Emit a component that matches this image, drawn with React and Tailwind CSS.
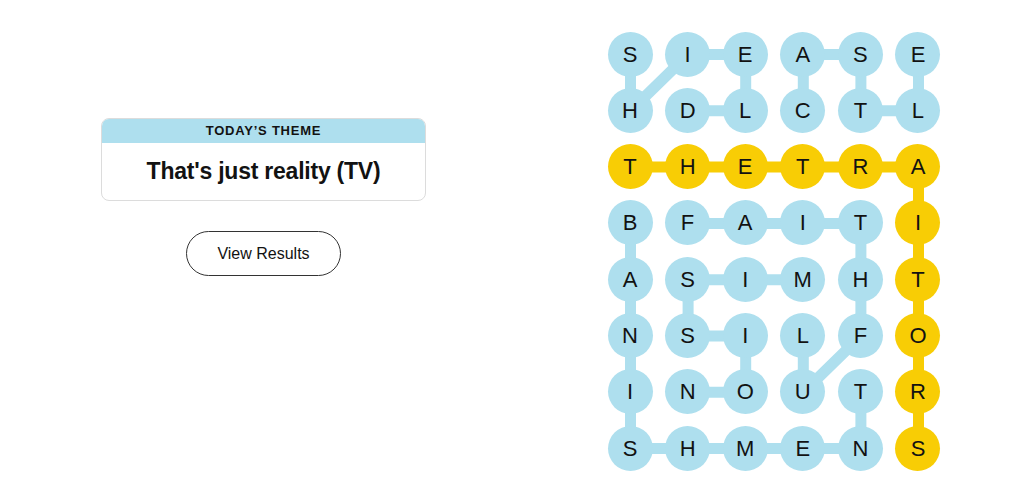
import React from 'react';

const BLUE = '#aedfee';
const YELLOW = '#f8cd05';

// letters of the board, row by row
const board = [
  'SIEASE',
  'HDLCTL',
  'THETRA',
  'BFAITI',
  'ASIMHT',
  'NSILFO',
  'INOUTR',
  'SHMENS',
];

// found words, as paths of [row, col]
const words = [
  { color: BLUE, path: [[0, 0], [1, 0], [0, 1], [0, 2], [1, 2], [1, 1]] },
  { color: BLUE, path: [[1, 3], [0, 3], [0, 4], [1, 4], [1, 5], [0, 5]] },
  {
    color: YELLOW,
    path: [[2, 0], [2, 1], [2, 2], [2, 3], [2, 4], [2, 5], [3, 5], [4, 5], [5, 5], [6, 5], [7, 5]],
  },
  {
    color: BLUE,
    path: [[3, 0], [4, 0], [5, 0], [6, 0], [7, 0], [7, 1], [7, 2], [7, 3], [7, 4], [6, 4]],
  },
  { color: BLUE, path: [[3, 1], [3, 2], [3, 3], [3, 4], [4, 4], [5, 4], [6, 3], [5, 3]] },
  { color: BLUE, path: [[4, 3], [4, 2], [4, 1], [5, 1], [5, 2], [6, 2], [6, 1]] },
];

const SIZE = 45;
const STEP_X = 57.6;
const STEP_Y = 56.3;

const spangram = new Set(words[2].path.map(([r, c]) => `${r}-${c}`));

const center = ([r, c]) => [SIZE / 2 + c * STEP_X, SIZE / 2 + r * STEP_Y];

const Board = () => (
  <div className="relative w-[333px] h-[439px]">
    <svg className="absolute inset-0" width="333" height="439">
      {words.map((w, i) => (
        <polyline
          key={i}
          points={w.path.map((p) => center(p).join(',')).join(' ')}
          fill="none"
          stroke={w.color}
          strokeWidth="11"
          strokeLinejoin="round"
        />
      ))}
    </svg>
    <div className="relative grid grid-cols-[repeat(6,45px)] gap-x-[12.6px] gap-y-[11.3px]">
      {board.map((row, r) =>
        row.split('').map((ch, c) => (
          <div
            key={`${r}-${c}`}
            className={`w-[45px] h-[45px] rounded-full flex items-center justify-center text-[22px] text-[#121212] ${
              spangram.has(`${r}-${c}`) ? 'bg-[#f8cd05]' : 'bg-[#aedfee]'
            }`}
          >
            {ch}
          </div>
        ))
      )}
    </div>
  </div>
);

export default function App() {
  return (
    <div className="w-[1024px] h-[492px] bg-white flex items-start font-['Liberation_Sans',Arial,sans-serif]">
      {/* theme card + results button */}
      <div className="ml-[101px] mt-[118px] w-[325px] flex flex-col items-center">
        <div className="w-full rounded-lg border border-[#dcdcdc] overflow-hidden">
          <div className="h-[24px] bg-[#aedfee] flex items-center justify-center text-[13px] font-bold tracking-[0.06em] text-[#121212]">
            TODAY’S THEME
          </div>
          <div className="h-[57px] flex items-center justify-center text-[23px] font-bold tracking-[-0.01em] text-[#121212]">
            That's just reality (TV)
          </div>
        </div>
        <button className="mt-[30px] w-[155px] h-[45px] rounded-full border border-[#333] text-[16px] text-[#121212] bg-white">
          View Results
        </button>
      </div>

      {/* letter board */}
      <div className="ml-[181.5px] mt-[31.5px]">
        <Board />
      </div>
    </div>
  );
}
